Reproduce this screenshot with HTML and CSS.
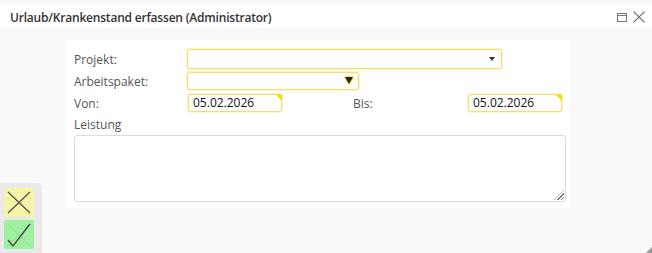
FILE: index.html
```html
<!DOCTYPE html>
<html lang="de">
<head>
    <meta charset="UTF-8">
    <title>Urlaub/Krankenstand erfassen</title>
    <link rel="stylesheet" href="styles.css">
</head>
<body>
<div class="window">
    <div class="titlebar">
        <span class="title">Urlaub/Krankenstand erfassen (Administrator)</span>
        <span class="tools">
            <svg class="tool" width="12" height="12" viewBox="0 0 12 12"><rect x="1.5" y="2.5" width="9" height="8" fill="none" stroke="#777"/><line x1="1.5" y1="4.5" x2="10.5" y2="4.5" stroke="#777"/></svg>
            <svg class="tool" width="14" height="14" viewBox="0 0 14 14"><path d="M1.5 1.5 L12.5 12.5 M12.5 1.5 L1.5 12.5" stroke="#777" stroke-width="1.1" fill="none"/></svg>
        </span>
    </div>
    <div class="content">
        <div class="actions">
            <div class="btn cancel">
                <svg width="30" height="29" viewBox="0 0 30 29"><path d="M4 4 L26 25 M26 4 L4 25" stroke="#555" stroke-width="1.3" fill="none"/></svg>
            </div>
            <div class="btn ok">
                <svg width="30" height="29" viewBox="0 0 30 29"><path d="M3 4 L27 26 M27 4 L3 26" stroke="#8fdf8f" stroke-width="1" fill="none"/><path d="M4 20 L9 26 L26 4" stroke="#444" stroke-width="1.3" fill="none"/></svg>
            </div>
        </div>
        <div class="panel">
            <div class="row r1">
                <label class="lbl">Projekt:</label>
                <div class="field select wide"><span class="arrow"></span></div>
            </div>
            <div class="row r2">
                <label class="lbl">Arbeitspaket:</label>
                <div class="field select mid"><span class="arrow big"></span></div>
            </div>
            <div class="row r3">
                <label class="lbl">Von:</label>
                <div class="field date">05.02.2026</div>
                <label class="lbl bis">Bis:</label>
                <div class="field date">05.02.2026</div>
            </div>
            <label class="lbl top">Leistung</label>
            <div class="memo"><span class="grip"></span></div>
        </div>
    </div>
    <span class="corner"></span>
</div>
</body>
</html>
```

FILE: styles.css
```css
body {
    margin: 0;
    font-family: 'Open Sans', sans-serif;
    background-color: #f7f7f7;
}
.window {
    width: 652px;
    height: 253px;
    position: relative;
    background-color: #f9f9f9;
    overflow: hidden;
}
.titlebar {
    margin-top: 4px;
    height: 24px;
    background-color: #fff;
    display: flex;
    align-items: center;
    justify-content: space-between;
    padding: 0 6px 0 10px;
}
.title {
    font-size: 12px;
    font-weight: 600;
    letter-spacing: -0.2px;
    color: #333;
    margin-top: 2px;
}
.tools {
    display: flex;
    align-items: center;
    gap: 4px;
    margin-top: 2px;
}
.content {
    display: flex;
    height: 225px;
}
.actions {
    align-self: flex-end;
    width: 42px;
    height: 70px;
    background-color: #e9e9e9;
    border-top-right-radius: 5px;
    padding: 5px 0 0 4px;
    box-sizing: border-box;
    display: flex;
    flex-direction: column;
    gap: 3px;
}
.btn {
    width: 30px;
    height: 29px;
    border-radius: 2px;
}
.btn svg {
    display: block;
}
.cancel {
    background-color: #f5f5a8;
}
.ok {
    background-color: #9ff09f;
}
.panel {
    margin: 12px 0 0 24px;
    width: 504px;
    height: 168px;
    background-color: #fff;
    padding: 9px 0 0 8px;
    box-sizing: border-box;
}
.row {
    display: flex;
    align-items: center;
}
.r1 { height: 20px; }
.r2 { height: 18px; margin-top: 3px; }
.r3 { height: 18px; margin-top: 4px; }
.lbl {
    font-size: 12px;
    color: #555;
    width: 113px;
    flex: none;
}
.lbl.bis {
    width: 114px;
    margin-left: 71px;
}
.lbl.top {
    display: block;
    margin-top: 5px;
    height: 16px;
    line-height: 16px;
}
.field {
    box-sizing: border-box;
    border: 1px solid #f5dc6e;
    box-shadow: 0 0 0 1px rgba(250, 232, 140, 0.45);
    border-radius: 3px;
    background-color: #fff;
    position: relative;
    height: 100%;
}
.wide { width: 315px; }
.mid { width: 172px; }
.date {
    width: 94px;
    font-size: 12px;
    color: #111;
    padding-left: 4px;
    line-height: 16px;
    margin-left: 1px;
}
.date::after {
    content: "";
    position: absolute;
    right: -1px;
    top: -1px;
    border-top: 7px solid #f5e000;
    border-left: 7px solid transparent;
    border-top-right-radius: 3px;
}
.arrow {
    position: absolute;
    right: 6px;
    top: 7px;
    border-top: 4px solid #333;
    border-left: 3px solid transparent;
    border-right: 3px solid transparent;
}
.arrow.big {
    right: 5px;
    top: 4px;
    border-top: 7px solid #222;
    border-left: 4px solid transparent;
    border-right: 4px solid transparent;
    filter: drop-shadow(0 0 1px #f0e000) drop-shadow(0 0 1px #f0e000);
}
.memo {
    margin-top: 2px;
    width: 492px;
    height: 67px;
    box-sizing: border-box;
    border: 1px solid #dcdcdc;
    border-radius: 3px;
    position: relative;
}
.grip {
    position: absolute;
    right: 1px;
    bottom: 1px;
    width: 10px;
    height: 10px;
    background: repeating-linear-gradient(135deg, transparent 0 1.5px, #777 1.5px 2.5px);
    clip-path: polygon(100% 0, 100% 100%, 0 100%);
}
.corner {
    position: absolute;
    right: 0;
    bottom: 0;
    width: 6px;
    height: 6px;
    background-color: #999;
    clip-path: polygon(100% 0, 100% 100%, 0 100%);
}
```
